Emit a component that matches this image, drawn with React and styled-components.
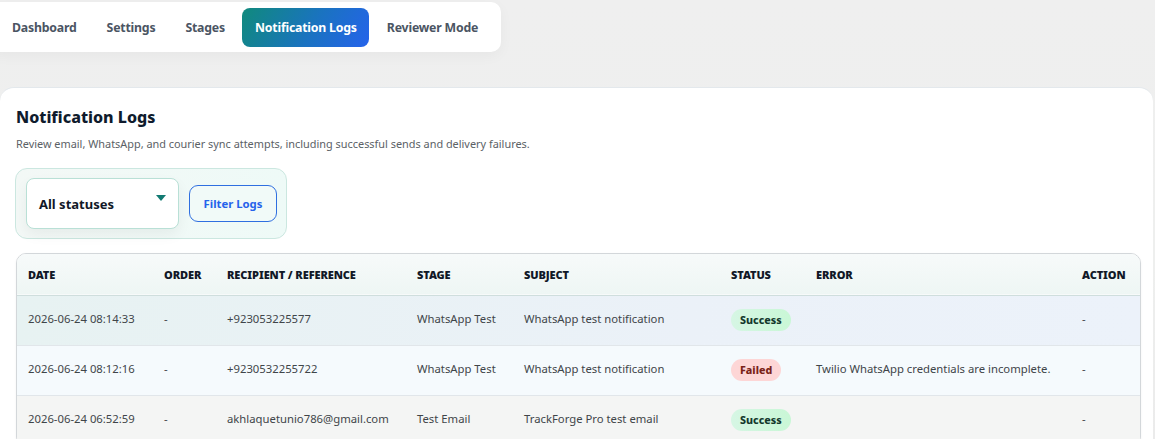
import React from 'react';
import styled, { createGlobalStyle } from 'styled-components';

const GlobalStyle = createGlobalStyle`
  html, body {
    margin: 0;
    padding: 0;
    background: #eeefee;
    font-family: "Noto Sans", "Open Sans", sans-serif;
    overflow: hidden;
  }
  * { box-sizing: border-box; }
`;

const Page = styled.div`
  width: 1155px;
  height: 439px;
  overflow: hidden;
  background: linear-gradient(180deg, #efefef 0%, #eeefee 60%, #ebebeb 100%);
  padding-top: 2px;
`;

const NavBar = styled.nav`
  display: flex;
  align-items: center;
  gap: 5px;
  width: 511px;
  height: 50px;
  margin-left: -10px;
  padding: 0 4px 0 9px;
  background: #ffffff;
  border-radius: 10px;
  box-shadow: 0 4px 14px rgba(0, 0, 0, 0.04);
`;

const Tab = styled.a`
  display: flex;
  align-items: center;
  height: 39px;
  padding: 0 12px 0 13px;
  border-radius: 8px;
  font-size: 12.3px;
  font-weight: 700;
  letter-spacing: -0.2px;
  color: ${({ $active }) => ($active ? '#ffffff' : '#4b5563')};
  background: ${({ $active }) =>
    $active ? 'linear-gradient(120deg, #108a7c 0%, #1a73c0 55%, #2563eb 100%)' : 'transparent'};
  text-decoration: none;
  white-space: nowrap;
`;

const Card = styled.section`
  margin-top: 35px;
  width: 1153px;
  height: 400px;
  background: #ffffff;
  border-top: 1px solid #e3e8ec;
  border-radius: 14px 14px 0 0;
  padding: 18px 14px 0 16px;
`;

const Title = styled.h2`
  margin: 0;
  font-size: 16px;
  font-weight: 800;
  color: #0f1b2d;
  line-height: 22px;
`;

const Subtitle = styled.p`
  margin: 8px 0 0;
  font-size: 10.9px;
  color: #5b6166;
  line-height: 16px;
`;

const FilterPanel = styled.div`
  display: inline-flex;
  align-items: center;
  gap: 10px;
  margin-top: 16px;
  margin-left: -1px;
  padding: 9px 9px 9px 10px;
  background: linear-gradient(90deg, #f3f8f6 0%, #eefaf7 100%);
  border: 1px solid #cbe7e0;
  border-radius: 12px;
`;

const Select = styled.div`
  position: relative;
  display: flex;
  align-items: center;
  width: 153px;
  height: 51px;
  padding-left: 12px;
  background: #ffffff;
  border: 1px solid #b9e0d6;
  border-radius: 8px;
  box-shadow: 0 6px 14px rgba(0, 0, 0, 0.05);
  font-size: 13px;
  font-weight: 700;
  color: #111827;
`;

const Caret = styled.span`
  position: absolute;
  right: 12px;
  top: 16px;
  width: 0;
  height: 0;
  border-left: 5px solid transparent;
  border-right: 5px solid transparent;
  border-top: 6px solid #117a72;
`;

const FilterButton = styled.button`
  width: 88px;
  height: 37px;
  background: #f1faf8;
  border: 1px solid #2f6fe0;
  border-radius: 9px;
  font-family: inherit;
  font-size: 11.3px;
  font-weight: 700;
  color: #2563eb;
`;

const TableWrap = styled.div`
  margin-top: 14px;
  width: 1125px;
  border: 1px solid #d3d7da;
  border-radius: 10px;
  overflow: hidden;
  box-shadow: 0 1px 3px rgba(0, 0, 0, 0.05);
`;

const Table = styled.table`
  width: 100%;
  border-collapse: collapse;
  table-layout: fixed;
`;

const HeadRow = styled.tr`
  height: 41px;
  background: linear-gradient(180deg, #f7fafa 0%, #eef6f4 100%);
  border-bottom: 1px solid #cfdedd;
`;

const Th = styled.th`
  width: ${({ $w }) => $w}px;
  padding: 1px 0 0 ${({ $pl }) => $pl ?? 0}px;
  text-align: left;
  font-size: 11px;
  font-weight: 900;
  color: #111827;
  letter-spacing: -0.1px;
`;

const rowBg = {
  hover: 'linear-gradient(90deg, #e7f2f2 0%, #ebf1f8 60%, #ecf2fa 100%)',
  light: '#f5fafd',
  plain: '#f4f5f4',
};

const Row = styled.tr`
  height: 50px;
  background: ${({ $tone }) => rowBg[$tone]};
  border-bottom: 1px solid #e1e6ea;
`;

const Td = styled.td`
  padding: 0 0 3px ${({ $pl }) => $pl ?? 0}px;
  font-size: 11.3px;
  color: #3f4549;
  white-space: nowrap;
`;

const Badge = styled.span`
  display: inline-flex;
  align-items: center;
  height: 22px;
  margin-top: 3px;
  padding: 0 9px;
  border-radius: 12px;
  font-size: 10.7px;
  font-weight: 800;
  background: ${({ $ok }) =>
    $ok ? 'linear-gradient(90deg, #d6f6e4 0%, #c9f7d6 100%)' : '#fdd6d6'};
  color: ${({ $ok }) => ($ok ? '#14392d' : '#7a2318')};
`;

const columns = [
  { key: 'date', label: 'Date', w: 147, pl: 11 },
  { key: 'order', label: 'Order', w: 63 },
  { key: 'recipient', label: 'Recipient / Reference', w: 190 },
  { key: 'stage', label: 'Stage', w: 107 },
  { key: 'subject', label: 'Subject', w: 207 },
  { key: 'status', label: 'Status', w: 85 },
  { key: 'error', label: 'Error', w: 266 },
  { key: 'action', label: 'Action', w: 58 },
];

const logs = [
  {
    date: '2026-06-24 08:14:33',
    recipient: '+923053225577',
    stage: 'WhatsApp Test',
    subject: 'WhatsApp test notification',
    ok: true,
    error: '',
    tone: 'hover',
  },
  {
    date: '2026-06-24 08:12:16',
    recipient: '+9230532255722',
    stage: 'WhatsApp Test',
    subject: 'WhatsApp test notification',
    ok: false,
    error: 'Twilio WhatsApp credentials are incomplete.',
    tone: 'light',
  },
  {
    date: '2026-06-24 06:52:59',
    recipient: 'akhlaquetunio786@gmail.com',
    stage: 'Test Email',
    subject: 'TrackForge Pro test email',
    ok: true,
    error: '',
    tone: 'plain',
  },
];

const tabs = ['Dashboard', 'Settings', 'Stages', 'Notification Logs', 'Reviewer Mode'];

export default function App() {
  return (
    <>
      <GlobalStyle />
      <Page>
        <NavBar>
          {tabs.map((t) => (
            <Tab key={t} $active={t === 'Notification Logs'}>
              {t}
            </Tab>
          ))}
        </NavBar>
        <Card>
          <Title>Notification Logs</Title>
          <Subtitle>
            Review email, WhatsApp, and courier sync attempts, including successful sends and delivery failures.
          </Subtitle>
          <FilterPanel>
            <Select>
              All statuses
              <Caret />
            </Select>
            <FilterButton>Filter Logs</FilterButton>
          </FilterPanel>
          <TableWrap>
            <Table>
              <thead>
                <HeadRow>
                  {columns.map((c) => (
                    <Th key={c.key} $w={c.w} $pl={c.pl}>
                      {c.label.toUpperCase()}
                    </Th>
                  ))}
                </HeadRow>
              </thead>
              <tbody>
                {logs.map((l) => (
                  <Row key={l.date} $tone={l.tone}>
                    <Td $pl={11}>{l.date}</Td>
                    <Td>-</Td>
                    <Td>{l.recipient}</Td>
                    <Td>{l.stage}</Td>
                    <Td>{l.subject}</Td>
                    <Td>
                      <Badge $ok={l.ok}>{l.ok ? 'Success' : 'Failed'}</Badge>
                    </Td>
                    <Td>{l.error}</Td>
                    <Td>-</Td>
                  </Row>
                ))}
              </tbody>
            </Table>
          </TableWrap>
        </Card>
      </Page>
    </>
  );
}
